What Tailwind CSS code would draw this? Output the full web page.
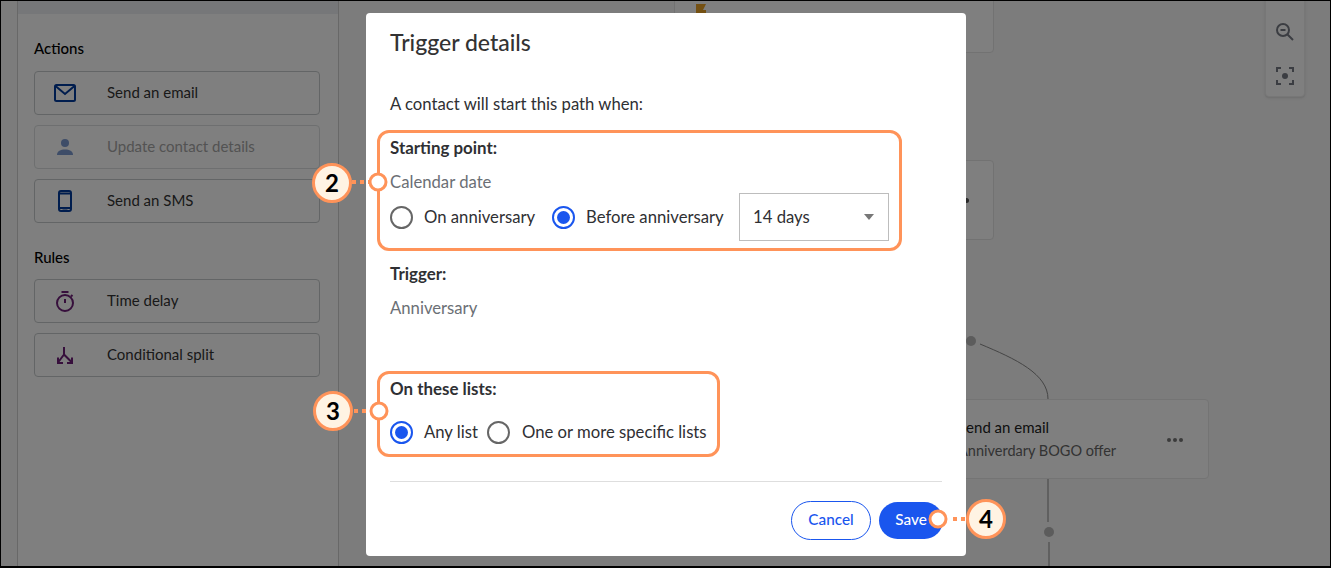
<!DOCTYPE html>
<html lang="en">
<head>
  <meta charset="UTF-8" />
  <title>Trigger details</title>
  <script src="https://cdn.jsdelivr.net/npm/@tailwindcss/browser@4"></script>
</head>
<body class="w-[1331px] h-[568px] overflow-hidden font-['Lato',sans-serif] text-[#2f3033]">
  <div class="relative w-full h-full overflow-hidden border border-black border-b-2 bg-[#f8f8f8]">

    <!-- Sidebar -->
    <aside class="absolute left-[16px] top-0 bottom-0 w-[322px] bg-white border-x border-[#d0d0d0]">
      <div class="h-[13px] bg-[#eceef2]"></div>
      <div class="px-4 pt-[25px]">
        <h3 class="text-[15px] leading-[18px] font-medium text-black">Actions</h3>
        <div class="mt-[14px] flex flex-col gap-[10px]">
          <div class="h-[44px] w-[286px] flex items-center rounded border border-[#c6cacc] text-[15px]">
            <span class="w-[60px] flex justify-center">
              <svg width="22" height="18" viewBox="0 0 22 18" fill="none" stroke="#003a9c" stroke-width="2"><rect x="1" y="1" width="20" height="16" rx="1.5"/><path d="M1.5 2l9.5 8 9.5-8"/></svg>
            </span>
            <span class="ml-[12px] pb-[1px] text-[#333]">Send an email</span>
          </div>
          <div class="h-[44px] w-[286px] flex items-center rounded border border-[#dcdfe0] text-[15px]">
            <span class="w-[60px] flex justify-center">
              <svg width="16" height="16" viewBox="0 0 16 16" fill="#7c9ad0"><circle cx="8" cy="4" r="4"/><path d="M0 16c0-3.8 3.6-5.4 8-5.4s8 1.6 8 5.4z"/></svg>
            </span>
            <span class="ml-[12px] pb-[1px] text-[#a6a6a6]">Update contact details</span>
          </div>
          <div class="h-[44px] w-[286px] flex items-center rounded border border-[#c6cacc] text-[15px]">
            <span class="w-[60px] flex justify-center">
              <svg width="14" height="22" viewBox="0 0 14 22" fill="none"><rect x="1" y="1" width="12" height="20" rx="2" stroke="#003a9c" stroke-width="2"/><path d="M1 3.5h12M1 18h12" stroke="#003a9c" stroke-width="2"/><path d="M4.5 19.4h5" stroke="#7c9ad0"/></svg>
            </span>
            <span class="ml-[12px] pb-[1px] text-[#333]">Send an SMS</span>
          </div>
        </div>
        <h3 class="mt-[25px] text-[15px] leading-[18px] font-medium text-black">Rules</h3>
        <div class="mt-[13px] flex flex-col gap-[10px]">
          <div class="h-[44px] w-[286px] flex items-center rounded border border-[#c6cacc] text-[15px]">
            <span class="w-[60px] flex justify-center">
              <svg width="18" height="21" viewBox="0 0 18 21" fill="none" stroke="#6e1f78" stroke-width="2"><circle cx="9" cy="12" r="8"/><path d="M5.5 1h7M9 8v4M15 5.5l1.5-1.5"/></svg>
            </span>
            <span class="ml-[12px] pb-[1px] text-[#333]">Time delay</span>
          </div>
          <div class="h-[44px] w-[286px] flex items-center rounded border border-[#c6cacc] text-[15px]">
            <span class="w-[60px] flex justify-center">
              <svg width="16" height="17" viewBox="0 0 16 17" fill="none" stroke="#6e1f78" stroke-width="2"><path d="M7 0v7.5l8 8M7 7.5l-6 8"/><path d="M1 10.5V16h5M15 10.5V16h-5"/></svg>
            </span>
            <span class="ml-[12px] pb-[1px] text-[#333]">Conditional split</span>
          </div>
        </div>
      </div>
    </aside>

    <!-- Canvas nodes -->
    <div class="absolute left-[673px] -top-[10px] w-[320px] h-[62px] bg-white rounded border border-[#e4e4e4]">
      <svg class="absolute left-[21px] top-[12px]" width="12" height="14" viewBox="0 0 12 14"><path d="M0 0h10L7 6h3v8H0z" fill="#e8a024"/></svg>
      <p class="absolute left-[70px] top-[17px] text-[15px] text-[#333] whitespace-nowrap">Upload of a contact list for the 98</p>
    </div>
    <div class="absolute left-[673px] top-[159px] w-[320px] h-[80px] bg-white rounded border border-[#e4e4e4]">
      <span class="absolute right-[24px] top-[37px] w-[5px] h-[5px] rounded-full bg-[#555]"></span>
    </div>
    <div class="absolute left-[899px] top-[398px] w-[309px] h-[80px] bg-white rounded border border-[#e8e8e8]">
      <p class="absolute left-[57px] top-[18px] text-[15px] leading-[18px] text-[#222] whitespace-nowrap">Send an email</p>
      <p class="absolute left-[57px] top-[42px] text-[14.5px] leading-[18px] text-[#666] whitespace-nowrap">Anniverdary BOGO offer</p>
      <div class="absolute right-[25px] top-[38px] flex gap-[2px]">
        <span class="w-[4px] h-[4px] rounded-full bg-[#777]"></span>
        <span class="w-[4px] h-[4px] rounded-full bg-[#777]"></span>
        <span class="w-[4px] h-[4px] rounded-full bg-[#777]"></span>
      </div>
    </div>
    <svg class="absolute left-0 top-0" width="1331" height="568" fill="none">
      <path d="M979 343c36 15 68 30 68 55M1047 478v43M1048 541v26" stroke="#8a8a8a"/>
      <circle cx="970" cy="340" r="5" fill="#b8b8b8"/>
      <circle cx="1048" cy="531" r="5" fill="#b8b8b8"/>
    </svg>

    <!-- Zoom controls -->
    <div class="absolute left-[1264px] -top-[8px] w-[40px] h-[104px] bg-white rounded-b border border-[#eee] shadow-sm flex flex-col items-center">
      <svg class="mt-[29px]" width="18" height="18" viewBox="0 0 18 18" fill="none" stroke="#777b84" stroke-width="2"><circle cx="7" cy="7" r="6"/><path d="M11.5 11.5l5.5 5.5M4.5 7h5"/></svg>
      <svg class="mt-[26px]" width="18" height="18" viewBox="0 0 18 18" fill="none" stroke="#777b84" stroke-width="2"><path d="M1 5V1h4M13 1h4v4M1 13v4h4M17 13v4h-4"/><circle cx="9" cy="9" r="3" fill="#777b84" stroke="none"/></svg>
    </div>

    <!-- Overlay -->
    <div class="absolute inset-0 bg-black/50"></div>

    <!-- Modal -->
    <div class="absolute left-[365px] top-[12px] w-[600px] h-[543px] bg-white rounded px-6 flex flex-col">
      <h2 class="pt-[15px] text-[23px] leading-[28px] font-medium text-[#333]">Trigger details</h2>
      <p class="mt-[36px] text-[16.7px] leading-[24px]">A contact will start this path when:</p>
      <p class="mt-[20px] text-[16.9px] leading-[24px] font-bold">Starting point:</p>
      <p class="mt-[10px] text-[16.7px] leading-[24px] text-[#6b6f75]">Calendar date</p>
      <div class="mt-[-1px] h-[48px] flex items-center text-[16.7px]">
        <span class="w-[23px] h-[23px] rounded-full border-[2px] border-[#666]"></span>
        <span class="ml-[11px] pt-[2px]">On anniversary</span>
        <span class="ml-[17px] w-[23px] h-[23px] rounded-full border-[2px] border-[#1a56ee] flex items-center justify-center"><span class="w-[13px] h-[13px] rounded-full bg-[#1a56ee]"></span></span>
        <span class="ml-[11px] pt-[2px]">Before anniversary</span>
        <div class="ml-auto mr-[53px] w-[150px] h-[48px] border border-[#bdbdbd] flex items-center justify-between pl-[13px] pr-[14px]">
          <span class="pt-[2px]">14 days</span>
          <span class="w-0 h-0 border-x-[5.5px] border-x-transparent border-t-[6px] border-t-[#777]"></span>
        </div>
      </div>
      <p class="mt-[21px] text-[16.9px] leading-[24px] font-bold">Trigger:</p>
      <p class="mt-[10px] text-[16.7px] leading-[24px] text-[#6b6f75]">Anniversary</p>
      <p class="mt-[57px] text-[16.9px] leading-[24px] font-bold">On these lists:</p>
      <div class="mt-[19px] h-[24px] flex items-center text-[16.7px]">
        <span class="w-[23px] h-[23px] rounded-full border-[2px] border-[#1a56ee] flex items-center justify-center"><span class="w-[13px] h-[13px] rounded-full bg-[#1a56ee]"></span></span>
        <span class="ml-[11px] pt-[2px]">Any list</span>
        <span class="ml-[9px] w-[23px] h-[23px] rounded-full border-[2px] border-[#666]"></span>
        <span class="ml-[12px] pt-[2px]">One or more specific lists</span>
      </div>
      <div class="mt-[37px] border-t border-[#dedede] w-[552px]"></div>
      <div class="mt-[19px] w-[553px] flex justify-end items-center gap-[8px] text-[15.3px] font-medium">
        <button class="w-[80px] h-[39px] pb-[2px] rounded-full border border-[#1a56ee] text-[#1a56ee]">Cancel</button>
        <button class="w-[64px] h-[37px] pb-[2px] rounded-full bg-[#1a56ee] text-white">Save</button>
      </div>
    </div>

    <!-- Annotations -->
    <div class="absolute left-[376px] top-[129px] w-[525px] h-[121px] rounded-[12px] border-[3px] border-[#ff9359]"></div>
    <div class="absolute left-[376px] top-[370px] w-[343px] h-[86px] rounded-[12px] border-[3px] border-[#ff9359]"></div>

    <svg class="absolute left-0 top-0" width="1331" height="568" fill="none" stroke="#ff9359" stroke-width="3">
      <path d="M351 181h18M353 410h18M952 518h18" stroke-width="4" stroke-dasharray="4 4"/>
      <circle cx="377" cy="181" r="8" fill="#fff"/>
      <circle cx="378" cy="410" r="8" fill="#fff"/>
      <circle cx="937" cy="518" r="8" fill="#fff"/>
    </svg>

    <span class="absolute left-[311px] top-[162px] w-[40px] h-[40px] rounded-full bg-[#fff3e3] border-[3px] border-[#ff9359] flex items-center justify-center text-[24px] font-bold text-black">2</span>
    <span class="absolute left-[312px] top-[390px] w-[40px] h-[40px] rounded-full bg-[#fff3e3] border-[3px] border-[#ff9359] flex items-center justify-center text-[24px] font-bold text-black">3</span>
    <span class="absolute left-[965px] top-[498px] w-[40px] h-[40px] rounded-full bg-[#fff3e3] border-[3px] border-[#ff9359] flex items-center justify-center text-[24px] font-bold text-black">4</span>
  </div>
</body>
</html>
